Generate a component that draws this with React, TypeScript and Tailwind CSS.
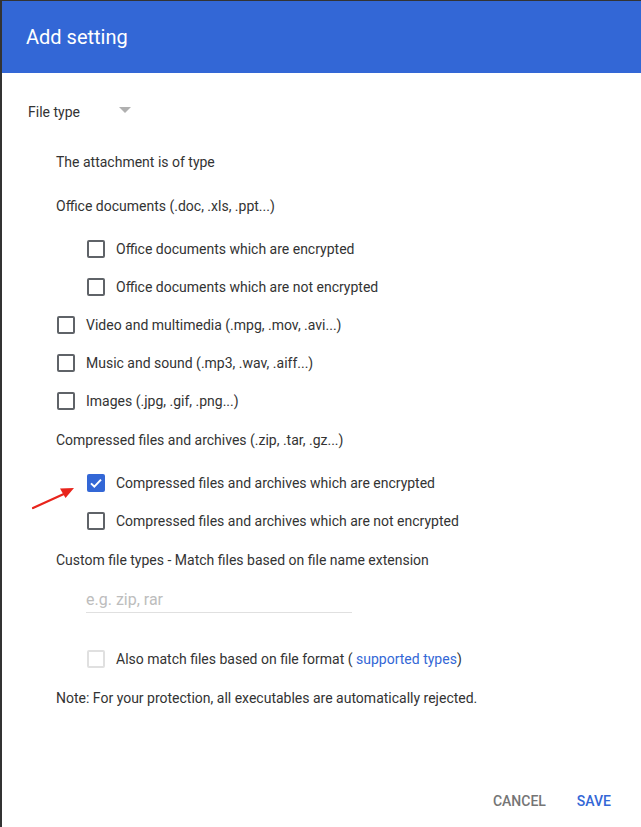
import { ReactNode } from 'react'

function Box({ checked = false, disabled = false }: { checked?: boolean; disabled?: boolean }) {
  if (checked) {
    return (
      <span className="flex h-[18px] w-[18px] shrink-0 items-center justify-center rounded-[2px] bg-[#3367d6]">
        <svg width="16" height="16" viewBox="0 0 24 24" fill="none" stroke="white" strokeWidth="3">
          <path d="M4.5 12.5l5 5L19.5 7" />
        </svg>
      </span>
    )
  }
  return (
    <span
      className={
        disabled
          ? 'block h-[18px] w-[18px] shrink-0 rounded-[2px] border-2 border-[#e0e0e0]'
          : 'block h-[18px] w-[18px] shrink-0 rounded-[2px] border-2 border-[#5f6368]'
      }
    />
  )
}

function Row({ indent, checked, children, className = '' }: { indent: 'l1' | 'l2'; checked?: boolean; children: ReactNode; className?: string }) {
  return (
    <div className={`flex h-[38px] items-center gap-[11px] ${indent === 'l2' ? 'pl-[85px]' : 'pl-[55px]'} ${className}`}>
      <Box checked={checked} />
      <span>{children}</span>
    </div>
  )
}

export default function App() {
  return (
    <div
      className="relative flex h-[827px] w-[641px] overflow-hidden bg-[#333]"
      style={{ fontFamily: 'Roboto, "Noto Sans", sans-serif' }}
    >
      <div className="ml-[2px] mt-[1px] flex flex-1 flex-col bg-white text-[14px] text-[#333]">
        {/* Header */}
        <div className="flex h-[72px] shrink-0 items-center bg-[#3367d6] pl-[24px]">
          <h1 className="text-[20px] text-white">Add setting</h1>
        </div>

        <div className="flex flex-1 flex-col">
          {/* File type select */}
          <div className="mt-[20px] flex h-[38px] items-center pl-[26px]">
            <span>File type</span>
            <span className="ml-[39px] mb-[4px] block h-0 w-0 border-x-[6px] border-t-[6px] border-x-transparent border-t-[#b0b0b0]" />
          </div>

          <div className="mt-[12px] flex h-[38px] items-center pl-[54px]">The attachment is of type</div>
          <div className="mt-[6px] flex h-[38px] items-center pl-[54px]">Office documents (.doc, .xls, .ppt...)</div>

          <Row indent="l2" className="mt-[5px]">Office documents which are encrypted</Row>
          <Row indent="l2">Office documents which are not encrypted</Row>
          <Row indent="l1">Video and multimedia (.mpg, .mov, .avi...)</Row>
          <Row indent="l1">Music and sound (.mp3, .wav, .aiff...)</Row>
          <Row indent="l1">Images (.jpg, .gif, .png...)</Row>

          <div className="mt-[1px] flex h-[38px] items-center pl-[54px]">Compressed files and archives (.zip, .tar, .gz...)</div>

          <Row indent="l2" checked className="mt-[5px]">Compressed files and archives which are encrypted</Row>
          <Row indent="l2">Compressed files and archives which are not encrypted</Row>

          <div className="mt-[1px] flex h-[38px] items-center pl-[54px]">Custom file types - Match files based on file name extension</div>

          <div className="pl-[84px]">
            <div className="flex h-[34px] w-[266px] items-center border-b border-[#e0e0e0] pt-[8px] text-[16px] text-[#bdbdbd]">
              e.g. zip, rar
            </div>
          </div>

          <div className="mt-[27px] flex h-[38px] items-center gap-[11px] pl-[85px]">
            <Box disabled />
            <span>
              Also match files based on file format ( <span className="text-[#3367d6]">supported types</span>)
            </span>
          </div>

          <div className="mt-[1px] flex h-[38px] items-center pl-[54px]">Note: For your protection, all executables are automatically rejected.</div>

          <div className="mt-auto mb-[8px] flex items-center justify-end gap-[31px] pr-[30px] font-medium">
            <button className="h-[36px] text-[#757575]">CANCEL</button>
            <button className="h-[36px] text-[#3367d6]">SAVE</button>
          </div>
        </div>
      </div>

      {/* Annotation arrow */}
      <svg className="absolute left-[30px] top-[484px]" width="48" height="28" viewBox="0 0 48 28">
        <path d="M3 24L36 9" stroke="#e8241c" strokeWidth="2.2" strokeLinecap="round" />
        <path d="M44 4L30 4.5L35.5 14Z" fill="#e8241c" />
      </svg>
    </div>
  )
}
